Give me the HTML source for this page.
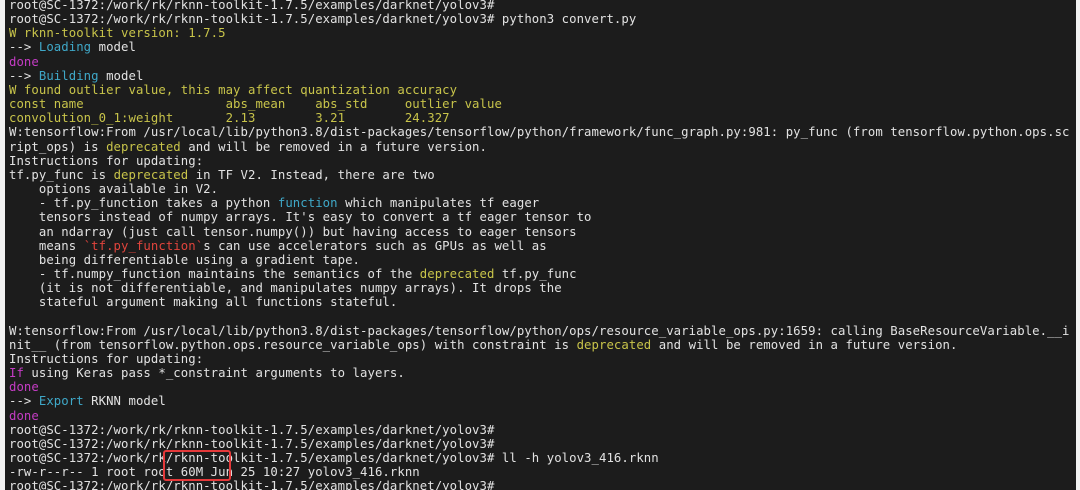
<!DOCTYPE html>
<html><head><meta charset="utf-8"><style>
html,body{margin:0;padding:0;width:1080px;height:490px;overflow:hidden;background:#f2f2f2}
.t{position:absolute;left:5px;top:0;width:1071px;height:490px;background:#1c1c1c;overflow:hidden}
pre{margin:0;position:absolute;left:4px;top:-2px;font-family:"DejaVu Sans Mono","Liberation Mono",monospace;font-size:12.3px;letter-spacing:0.065px;line-height:14.15px;color:#e2e2e2;white-space:pre}
.y{color:#c8c44a}.c{color:#3fa8c8}.m{color:#c43cc4}.r{color:#e0443c}
.box{position:absolute;left:163px;top:450px;width:68px;height:31px;border:2px solid #e5393a;border-radius:3px;box-sizing:border-box}
</style></head><body><div class="t"><pre>root@SC-1372:/work/rk/rknn-toolkit-1.7.5/examples/darknet/yolov3#
root@SC-1372:/work/rk/rknn-toolkit-1.7.5/examples/darknet/yolov3# python3 convert.py
<span class="y">W rknn-toolkit version: 1.7.5</span>
--&gt; <span class="c">Loading</span> model
<span class="m">done</span>
--&gt; <span class="c">Building</span> model
<span class="y">W found outlier value, this may affect quantization accuracy</span>
<span class="y">const name                   abs_mean    abs_std     outlier value</span>
<span class="y">convolution_0_1:weight       2.13        3.21        24.327</span>
W:tensorflow:From /usr/local/lib/python3.8/dist-packages/tensorflow/python/framework/func_graph.py:981: py_func (from tensorflow.python.ops.sc
ript_ops) is <span class="y">deprecated</span> and will be removed in a future version.
Instructions for updating:
tf.py_func is <span class="y">deprecated</span> in TF V2. Instead, there are two
    options available in V2.
    - tf.py_function takes a python <span class="c">function</span> which manipulates tf eager
    tensors instead of numpy arrays. It's easy to convert a tf eager tensor to
    an ndarray (just call tensor.numpy()) but having access to eager tensors
    means <span class="r">`tf.py_function`</span>s can use accelerators such as GPUs as well as
    being differentiable using a gradient tape.
    - tf.numpy_function maintains the semantics of the <span class="y">deprecated</span> tf.py_func
    (it is not differentiable, and manipulates numpy arrays). It drops the
    stateful argument making all functions stateful.

W:tensorflow:From /usr/local/lib/python3.8/dist-packages/tensorflow/python/ops/resource_variable_ops.py:1659: calling BaseResourceVariable.__i
nit__ (from tensorflow.python.ops.resource_variable_ops) with constraint is <span class="y">deprecated</span> and will be removed in a future version.
Instructions for updating:
<span class="m">If</span> using Keras pass *_constraint arguments to layers.
<span class="m">done</span>
--&gt; <span class="c">Export</span> RKNN model
<span class="m">done</span>
root@SC-1372:/work/rk/rknn-toolkit-1.7.5/examples/darknet/yolov3#
root@SC-1372:/work/rk/rknn-toolkit-1.7.5/examples/darknet/yolov3#
root@SC-1372:/work/rk/rknn-toolkit-1.7.5/examples/darknet/yolov3# ll -h yolov3_416.rknn
-rw-r--r-- 1 root root 60M Jun 25 10:27 yolov3_416.rknn
root@SC-1372:/work/rk/rknn-toolkit-1.7.5/examples/darknet/yolov3#</pre></div><div class="box"></div></body></html>
